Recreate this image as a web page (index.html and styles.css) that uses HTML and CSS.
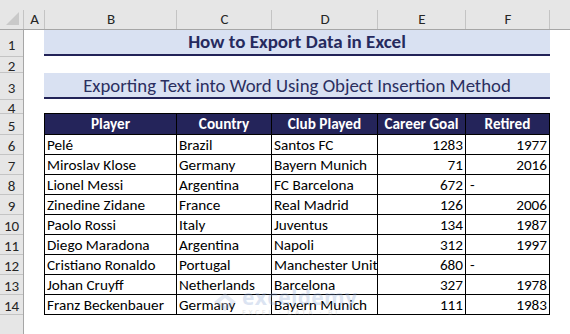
FILE: index.html
```html
<!DOCTYPE html>
<html>
<head>
<meta charset="utf-8">
<link rel="stylesheet" href="styles.css">
</head>
<body>
<div class="sheet">
  <div class="colhdr">
    <div class="ch corner"><svg width="16" height="16" viewBox="0 0 16 16"><polygon points="1,14 14,14 14,1" fill="#c9c9c9"/></svg></div>
    <div class="ch w-a">A</div>
    <div class="ch w-b">B</div>
    <div class="ch w-c">C</div>
    <div class="ch w-d">D</div>
    <div class="ch w-e">E</div>
    <div class="ch w-f">F</div>
    <div class="ch w-g"></div>
  </div>
  <div class="main">
    <div class="rowhdr">
      <div class="rh h27">1</div>
      <div class="rh h16">2</div>
      <div class="rh h27">3</div>
      <div class="rh h14">4</div>
      <div class="rh h21">5</div>
      <div class="rh h20">6</div>
      <div class="rh h20">7</div>
      <div class="rh h20">8</div>
      <div class="rh h20">9</div>
      <div class="rh h20">10</div>
      <div class="rh h20">11</div>
      <div class="rh h20">12</div>
      <div class="rh h20">13</div>
      <div class="rh h20">14</div>
      <div class="rh rest"></div>
    </div>
    <div class="content">
      <div class="title">How to Export Data in Excel</div>
      <div class="subtitle">Exporting Text into Word Using Object Insertion Method</div>
      <div class="grid">
        <div class="th">Player</div><div class="th">Country</div><div class="th">Club Played</div><div class="th">Career Goal</div><div class="th">Retired</div>
        <div class="td">Pelé</div><div class="td">Brazil</div><div class="td">Santos FC</div><div class="td num">1283</div><div class="td num">1977</div>
        <div class="td">Miroslav Klose</div><div class="td">Germany</div><div class="td">Bayern Munich</div><div class="td num">71</div><div class="td num">2016</div>
        <div class="td">Lionel Messi</div><div class="td">Argentina</div><div class="td">FC Barcelona</div><div class="td num">672</div><div class="td dash">-</div>
        <div class="td">Zinedine Zidane</div><div class="td">France</div><div class="td">Real Madrid</div><div class="td num">126</div><div class="td num">2006</div>
        <div class="td">Paolo Rossi</div><div class="td">Italy</div><div class="td">Juventus</div><div class="td num">134</div><div class="td num">1987</div>
        <div class="td">Diego Maradona</div><div class="td">Argentina</div><div class="td">Napoli</div><div class="td num">312</div><div class="td num">1997</div>
        <div class="td">Cristiano Ronaldo</div><div class="td">Portugal</div><div class="td">Manchester United</div><div class="td num">680</div><div class="td dash">-</div>
        <div class="td">Johan Cruyff</div><div class="td">Netherlands</div><div class="td">Barcelona</div><div class="td num">327</div><div class="td num">1978</div>
        <div class="td">Franz Beckenbauer</div><div class="td">Germany</div><div class="td">Bayern Munich</div><div class="td num">111</div><div class="td num">1983</div>
      </div>
      <div class="watermark">
        <svg width="24" height="22" viewBox="0 0 24 22"><path d="M1 11 L12 2 L23 11 L12 20 Z" fill="#a9bcdc"/><path d="M7 11 L12 7 L17 11 L12 15 Z" fill="#ffffff"/></svg>
        <div class="wm-text"><span class="wm-name">exceldemy</span><span class="wm-sub">EXCEL · DATA · BI</span></div>
      </div>
    </div>
  </div>
</div>
</body>
</html>
```
FILE: styles.css
```css
* { box-sizing: border-box; }
html, body { margin: 0; padding: 0; }
body {
  width: 570px;
  height: 334px;
  overflow: hidden;
  background: #ffffff;
  font-family: Carlito, Calibri, Lato, sans-serif;
  color: #000;
}
.sheet { display: flex; flex-direction: column; width: 570px; height: 334px; }

.colhdr {
  display: flex;
  height: 30px;
  background: #e6e6e6;
  border-bottom: 1px solid #a6a6a6;
}
.ch {
  height: 29px;
  padding-top: 10px;
  line-height: 19px;
  text-align: center;
  font-size: 15px;
  color: #262626;
  background: linear-gradient(#c4c4c4, #c4c4c4) right bottom / 1px 19px no-repeat;
}
.corner { width: 24px; display: flex; align-items: flex-end; justify-content: flex-end; padding: 0 2px 2px 0; }
.corner svg { display: block; margin-right: 1px; }
.w-a { width: 21px; }
.w-b { width: 132px; }
.w-c { width: 95px; }
.w-d { width: 106px; }
.w-e { width: 88px; }
.w-f { width: 84px; }
.w-g { flex: 1; background: none; }

.main { display: flex; flex: 1; }
.rowhdr {
  width: 24px;
  display: flex;
  flex-direction: column;
  background: #e6e6e6;
  border-right: 1px solid #a6a6a6;
}
.rh {
  border-bottom: 1px solid #c4c4c4;
  font-size: 15px;
  color: #262626;
  text-align: center;
  display: flex;
  align-items: center;
  justify-content: center;
  padding-top: 3px;
}
.h27 { height: 27px; }
.h16 { height: 16px; }
.h14 { height: 14px; }
.h21 { height: 21px; }
.h20 { height: 20px; }
.rest { flex: 1; border-bottom: none; }

.content { flex: 1; padding-left: 20px; position: relative; }
.title {
  width: 506px;
  height: 26px;
  background: #d9e1f2;
  border-bottom: 2px solid #222358;
  margin-bottom: 17px;
  text-align: center;
  font-weight: bold;
  font-size: 19px;
  line-height: 24px;
  color: #262a5e;
}
.subtitle {
  width: 506px;
  height: 26px;
  background: #d9e1f2;
  border-bottom: 2px solid #222358;
  margin-bottom: 14px;
  text-align: center;
  font-size: 18.8px;
  line-height: 25px;
  color: #2b2f60;
}
.grid {
  display: grid;
  width: 506px;
  grid-template-columns: 131px 94px 105px 87px 83px;
  grid-template-rows: 20px repeat(9, 19px);
  gap: 1px;
  padding: 1px;
  background: #000;
  font-size: 15.2px;
}
.th {
  background: #24245a;
  color: #fff;
  font-weight: bold;
  text-align: center;
  line-height: 21px;
  white-space: nowrap;
}
.td {
  background: #fff;
  line-height: 20px;
  padding: 0 2px 0 2px;
  white-space: nowrap;
  overflow: hidden;
}
.num { text-align: right; padding-right: 2px; }
.dash { padding-left: 4px; }

.watermark {
  position: absolute;
  left: 189px;
  top: 257px;
  display: flex;
  align-items: center;
  gap: 5px;
  opacity: 0.3;
  pointer-events: none;
}
.wm-text { display: flex; flex-direction: column; line-height: 1; }
.wm-name { font-family: "Open Sans", sans-serif; font-size: 21px; font-weight: bold; color: #8fa9d6; letter-spacing: 0.3px; }
.wm-sub { font-family: "Open Sans", sans-serif; font-size: 7px; color: #9a9a9a; letter-spacing: 2.5px; margin-top: 1px; }
```
